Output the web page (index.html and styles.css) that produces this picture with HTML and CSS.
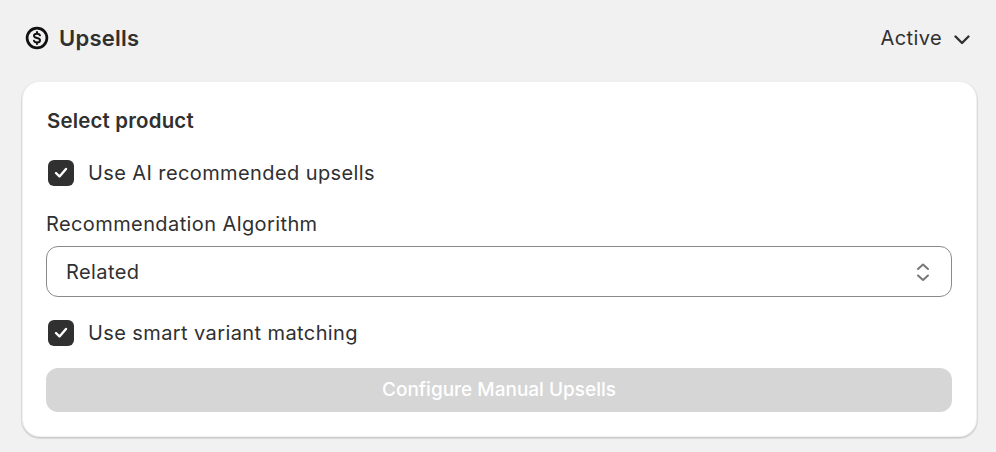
FILE: index.html
```html
<!DOCTYPE html>
<html lang="en">
<head>
<meta charset="utf-8">
<title>Upsells</title>
<link rel="stylesheet" href="styles.css">
</head>
<body>
<header class="head">
  <div class="head-title">
    <svg class="head-icon" viewBox="0 0 26 26" aria-hidden="true"><circle cx="13" cy="13" r="9.900" fill="none" stroke="#111" stroke-width="2.700"/><path d="M16 10.300c-.4-1-1.600-1.600-3-1.600-1.700 0-3 .8-3 2.100 0 3 6 1.400 6 4.400 0 1.300-1.400 2.200-3 2.200-1.500 0-2.600-.6-3-1.600M13 7v1.700M13 17.300V19" fill="none" stroke="#111" stroke-width="2" stroke-linecap="round"/></svg>
    <h1 class="title">Upsells</h1>
  </div>
  <div class="status">
    <span>Active</span>
    <svg class="status-chevron" viewBox="0 0 18 12" aria-hidden="true"><path d="M2.500 2.500l6.500 6.500 6.500-6.500" fill="none" stroke="#303030" stroke-width="2.400" stroke-linecap="round" stroke-linejoin="round"/></svg>
  </div>
</header>
<main class="card">
  <h2 class="card-title">Select product</h2>
  <label class="check check-first">
    <span class="box"><svg viewBox="0 0 26 26" aria-hidden="true"><path d="M8 13l3.500 3.500 6.500-7.500" fill="none" stroke="#fff" stroke-width="2.400" stroke-linecap="round" stroke-linejoin="round"/></svg></span>
    <span>Use AI recommended upsells</span>
  </label>
  <div class="field-label">Recommendation Algorithm</div>
  <div class="select">
    <span>Related</span>
    <svg class="select-icon" viewBox="0 0 16 26" aria-hidden="true"><path d="M3 10l5-4.500 5 4.500M3 16.500l5 4.500 5-4.500" fill="none" stroke="#777" stroke-width="2" stroke-linecap="round" stroke-linejoin="round"/></svg>
  </div>
  <label class="check check-second">
    <span class="box"><svg viewBox="0 0 26 26" aria-hidden="true"><path d="M8 13l3.500 3.500 6.500-7.500" fill="none" stroke="#fff" stroke-width="2.400" stroke-linecap="round" stroke-linejoin="round"/></svg></span>
    <span>Use smart variant matching</span>
  </label>
  <button class="btn" type="button" disabled>Configure Manual Upsells</button>
</main>
</body>
</html>
```

FILE: styles.css
```css
* { box-sizing: border-box; }
html, body { margin: 0; height: 100%; }
body {
  background: #f1f1f1;
  color: #303030;
  font-family: Inter, "Liberation Sans", sans-serif;
  font-size: 20px;
  line-height: 28px;
  letter-spacing: .4px;
  padding: 24px 19px 0 22px;
  overflow: hidden;
}
.head {
  display: flex;
  justify-content: space-between;
  align-items: center;
  height: 28px;
  padding-left: 2px;
  margin-bottom: 29px;
}
.head-title { display: flex; align-items: center; gap: 9px; }
.head-icon { width: 26px; height: 26px; display: block; }
.title { margin: 0; font-size: 22px; font-weight: 600; line-height: 28px; letter-spacing: .25px; }
.status { display: flex; align-items: center; gap: 11px; padding-right: 6px; }
.status-chevron { width: 18px; height: 12px; display: block; margin-top: 3px; }
.card {
  background: #fff;
  border-radius: 18px;
  height: 356px;
  padding: 26px 25px 0 24px;
  box-shadow: 0 1px 0 1px rgba(0,0,0,.05), 0 1px 2px rgba(0,0,0,.15), inset 0 0 0 1px rgba(0,0,0,.06);
}
.card-title { margin: 0 0 0 1px; font-size: 20.400px; font-weight: 600; line-height: 28px; letter-spacing: .2px; }
.check { display: flex; align-items: center; gap: 14px; padding-left: 2px; }
.check-first { margin-top: 24px; }
.check-second { margin-top: 22px; }
.box {
  width: 26px;
  height: 26px;
  border-radius: 6px;
  background: #303030;
  display: block;
}
.box svg { width: 26px; height: 26px; display: block; }
.field-label { margin-top: 23px; }
.select {
  display: flex;
  justify-content: space-between;
  align-items: center;
  margin-top: 8px;
  height: 51px;
  border: 1px solid #8a8a8a;
  border-radius: 12px;
  padding: 0 20px 0 19px;
}
.select-icon { width: 16px; height: 26px; display: block; }
.btn {
  display: block;
  width: 100%;
  height: 44px;
  margin-top: 21px;
  border: 0;
  border-radius: 12px;
  background: #d6d6d6;
  color: #fff;
  font: 500 19px/28px Inter, "Liberation Sans", sans-serif;
}
```
